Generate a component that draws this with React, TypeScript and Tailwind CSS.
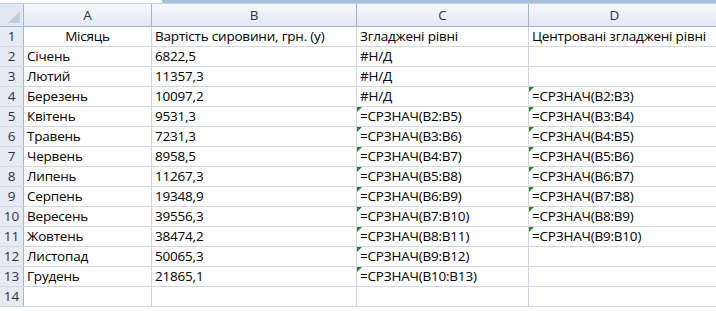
import React from "react";

const rows: [string, string, string, string, boolean, boolean][] = [
  ["Місяць", "Вартість сировини, грн. (y)", "Згладжені рівні", "Центровані згладжені рівні", false, false],
  ["Січень", "6822,5", "#Н/Д", "", false, false],
  ["Лютий", "11357,3", "#Н/Д", "", false, false],
  ["Березень", "10097,2", "#Н/Д", "=СРЗНАЧ(B2:B3)", false, true],
  ["Квітень", "9531,3", "=СРЗНАЧ(B2:B5)", "=СРЗНАЧ(B3:B4)", true, true],
  ["Травень", "7231,3", "=СРЗНАЧ(B3:B6)", "=СРЗНАЧ(B4:B5)", true, true],
  ["Червень", "8958,5", "=СРЗНАЧ(B4:B7)", "=СРЗНАЧ(B5:B6)", true, true],
  ["Липень", "11267,3", "=СРЗНАЧ(B5:B8)", "=СРЗНАЧ(B6:B7)", true, true],
  ["Серпень", "19348,9", "=СРЗНАЧ(B6:B9)", "=СРЗНАЧ(B7:B8)", true, true],
  ["Вересень", "39556,3", "=СРЗНАЧ(B7:B10)", "=СРЗНАЧ(B8:B9)", true, true],
  ["Жовтень", "38474,2", "=СРЗНАЧ(B8:B11)", "=СРЗНАЧ(B9:B10)", true, true],
  ["Листопад", "50065,3", "=СРЗНАЧ(B9:B12)", "", true, false],
  ["Грудень", "21865,1", "=СРЗНАЧ(B10:B13)", "", true, false],
  ["", "", "", "", false, false],
];

function Tri() {
  return (
    <span className="absolute left-0 top-0 w-0 h-0 border-t-[5px] border-r-[5px] border-t-[#1f8a1f] border-r-transparent" />
  );
}

function Cell({ w, text, center, tri }: { w: string; text: string; center?: boolean; tri?: boolean }) {
  return (
    <div
      className={`relative shrink-0 h-full border-r border-[#d0d7e5] flex items-end pb-[1px] whitespace-nowrap overflow-visible ${w} ${center ? "justify-center" : "pl-[3px]"}`}
    >
      {tri && <Tri />}
      <span className="leading-[17px]">{text}</span>
    </div>
  );
}

export default function App() {
  return (
    <div
      className="w-[716px] h-[311px] overflow-hidden bg-white text-black text-[13.5px] tracking-[-0.2px]"
      style={{ fontFamily: '"Open Sans", "Liberation Sans", sans-serif' }}
    >
      {/* top strip */}
      <div className="relative h-[3px] bg-white">
        <div className="absolute left-[162px] right-0 top-0 h-[3px] bg-[#a9c0dd]" />
      </div>
      <div className="h-[1px] bg-[#c5d2e3]" />
      {/* column header */}
      <div className="flex h-[23px] border-b border-[#9eb6ce] bg-gradient-to-b from-[#f7f9fc] to-[#e3e9f2] text-[#24364f] tracking-normal">
        <div className="relative w-[24px] shrink-0 h-full border-r border-[#9eb6ce] bg-[#e3e9f2]">
          <span
            className="absolute right-[3px] bottom-[3px] w-0 h-0 border-l-[12px] border-l-transparent"
            style={{ borderBottom: "12px solid #c3ccd9" }}
          />
        </div>
        <div className="w-[128px] shrink-0 border-r border-[#9eb6ce] flex items-center justify-center">A</div>
        <div className="w-[205px] shrink-0 border-r border-[#9eb6ce] flex items-center justify-center">B</div>
        <div className="w-[172px] shrink-0 border-r border-[#9eb6ce] flex items-center justify-center">C</div>
        <div className="flex-1 flex items-center justify-center pr-[16px]">D</div>
      </div>
      {rows.map((r, i) => (
        <div key={i} className="flex h-[20px] border-b border-[#d0d7e5]">
          <div className="w-[24px] shrink-0 h-full border-r border-[#9eb6ce] bg-[#e6ebf2] flex items-end justify-center pb-[1px] text-[#24364f] leading-[17px] tracking-normal">
            {i + 1}
          </div>
          <Cell w="w-[128px]" text={r[0]} center={i === 0} />
          <Cell w="w-[205px]" text={r[1]} />
          <Cell w="w-[172px]" text={r[2]} tri={r[4]} />
          <div className="relative flex-1 h-full pl-[3px] flex items-end pb-[1px] whitespace-nowrap">
            {r[5] && <Tri />}
            <span className="leading-[17px]">{r[3]}</span>
          </div>
        </div>
      ))}
    </div>
  );
}
